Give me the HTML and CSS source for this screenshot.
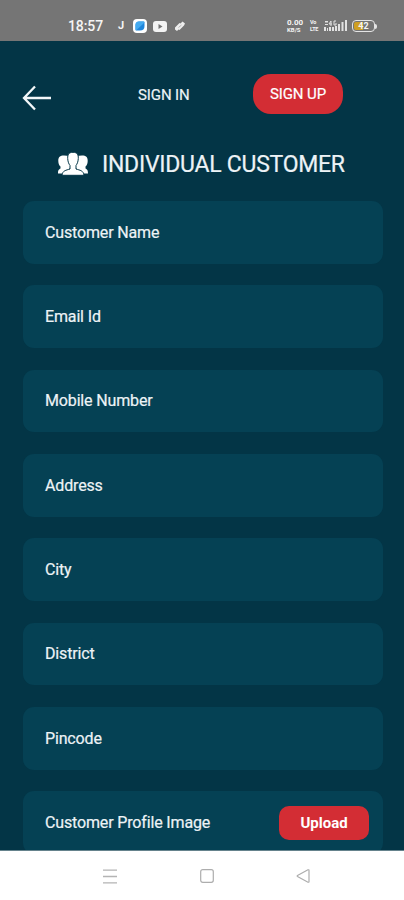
FILE: index.html
```html
<!DOCTYPE html>
<html lang="en">
<head>
<meta charset="utf-8">
<title>Individual Customer</title>
<link rel="stylesheet" href="styles.css">
</head>
<body>
<div class="phone">
  <header class="status">
    <span class="clock">18:57</span>
    <span class="letter">J</span>
    <svg class="app" width="14" height="14" viewBox="0 0 14 14"><rect width="14" height="14" rx="4" fill="#fff"/><path d="M6 2.500h4.500q1 0 1 1V7q0 4.500-4.500 4.500H3.500q-1 0-1-1V6q0-3.500 3.500-3.500z" fill="#1f86dc"/><path d="M6 2.500h4.500q1 0 1 1L3 11.500q-.5-.3-.5-1V6q0-3.500 3.500-3.500z" fill="#43aaf0"/></svg>
    <svg class="video" width="14" height="11" viewBox="0 0 14 11"><rect width="14" height="11" rx="3" fill="#f4f4f4"/><path d="M5.500 3l4 2.500-4 2.500z" fill="#747474"/></svg>
    <svg class="tag" width="12" height="12" viewBox="0 0 12 12"><path d="M1 7.500L5.500 3l1 .5L8.500 1.500l2.500 2-1 2L5.500 10l-1-.5L3 11 1 9.500z" fill="#eee"/><path d="M4.500 7.500l3-2.500" stroke="#999" stroke-width=".7"/></svg>
    <span class="rate"><b>0.00</b><b>KB/S</b></span>
    <span class="volte"><b>Vo</b><b>LTE</b></span>
    <svg class="signal" width="24" height="14" viewBox="0 0 24 14"><path fill="#e2e2e2" d="M1 2h3v1.500H1zM1 5h3v1H1zM0 8h2v4H0zM3 9h1v3H3zM5 8h2v4H5zM8 8h2v4H8zM11 7h2v5h-2zM14 5h2v7h-2zM17.500 3h2v9h-2zM21 1h2v11h-2z"/><path d="M5 5h3M7 2v5M5 5l2-3M12 2h-2v4h2V4" stroke="#e2e2e2" fill="none"/></svg>
    <span class="battery"><i class="level"></i><b>42</b></span><i class="nub"></i>
  </header>
  <main class="screen">
    <nav class="tabs">
      <svg class="back" width="30" height="26" viewBox="0 0 30 26"><path d="M13 1.500L2 13l11 11.500M2 13h27" fill="none" stroke="#f3f7f9" stroke-width="2.300"/></svg>
      <span class="signin">SIGN IN</span>
      <span class="signup">SIGN UP</span>
    </nav>
    <h1 class="title">
      <svg width="32" height="24" viewBox="0 0 32 24"><g fill="#fff"><path d="M7 3.500C3 3.500 1.200 5 1.300 9c.1 3 1 4.500 2.200 5.500v2C2 17.300 1 18 1 21.500h8L13 16V4z"/><path d="M25 3.500c4 0 5.800 1.500 5.700 5.500-.1 3-1 4.500-2.200 5.500v2c1.500.8 2.500 1.500 2.500 5h-8L19 16V4z"/><path d="M16 .3c-4 0-5.500 2.200-5.300 6.200.2 3.500 1.200 5.500 2.300 7v3.500C9 18.300 5.500 18.500 5 23.300h22c-.5-4.800-4-5-8-6.300v-3.500c1.100-1.500 2.100-3.500 2.300-7C21.500 2.500 20 .3 16 .3z" stroke="#033546" stroke-width="1"/></g></svg>
      <span>INDIVIDUAL CUSTOMER</span>
    </h1>
    <form class="fields">
      <div class="field">Customer Name</div>
      <div class="field">Email Id</div>
      <div class="field">Mobile Number</div>
      <div class="field">Address</div>
      <div class="field">City</div>
      <div class="field">District</div>
      <div class="field">Pincode</div>
      <div class="field">Customer Profile Image<span class="upload">Upload</span></div>
    </form>
  </main>
  <footer class="navbar">
    <svg width="14" height="15" viewBox="0 0 14 15"><path d="M0 1.200h14M0 7.500h14M0 13.800h14" stroke="#b4b4b4" stroke-width="1.300"/></svg>
    <svg width="14" height="14" viewBox="0 0 14 14"><rect x=".7" y=".7" width="12.600" height="12.600" rx="2" fill="none" stroke="#adadad" stroke-width="1.200"/></svg>
    <svg width="14" height="14" viewBox="0 0 14 14"><path d="M12 .8L1.500 6.500q-.7.500 0 1L12 13.200q1 .3 1-.7v-11q0-1-1-.7z" fill="none" stroke="#adadad" stroke-width="1.200"/></svg>
  </footer>
</div>
</body>
</html>
```
FILE: styles.css
```css
* { box-sizing: border-box; }
body { margin: 0; font-family: Roboto, "Liberation Sans", sans-serif; }
.phone { width: 404px; height: 900px; display: flex; flex-direction: column; overflow: hidden; background: #fff; }
.status { height: 41px; flex: none; display: flex; align-items: center; padding: 11px 0 0 68px; background: #757575; color: #f4f4f4; }
.clock { width: 50px; font: 500 14px/16px Roboto, sans-serif; letter-spacing: -.1px; }
.letter { width: 15px; font: 700 11px/12px Roboto, sans-serif; }
.app, .video, .tag, .signal { flex: none; }
.video { margin-left: 6px; }
.tag { margin-left: 7px; }
.rate, .volte { display: flex; flex-direction: column; flex: none; }
.rate { margin-left: 101px; width: 23px; font-size: 8px; line-height: 7px; }
.rate b + b { font-size: 6px; line-height: 7px; }
.volte { width: 14px; font-size: 5.500px; line-height: 7px; letter-spacing: -.2px; }
.battery { position: relative; width: 23px; height: 12px; margin-left: 4px; border: 1.500px solid #e4e4e4; border-radius: 4px; flex: none; text-align: center; font-size: 9px; line-height: 10px; }
.level { position: absolute; left: 1px; top: 1px; width: 9px; height: 8px; border-radius: 2px 0 0 2px; background: #cf9f22; }
.battery b { position: relative; }
.nub { width: 2px; height: 5px; border-radius: 0 2px 2px 0; background: #e4e4e4; }
.screen { flex: none; height: 810px; overflow: hidden; background: #033546; color: #edf3f6; border-bottom: 1px solid #65828c; }
.tabs { display: flex; align-items: center; height: 40px; margin-top: 33px; padding-left: 22px; font-size: 15px; line-height: 18px; -webkit-text-stroke: .2px currentColor; }
.back { margin-top: 7px; }
.signin { margin-left: 86px; padding-top: 1px; width: 115px; letter-spacing: -.1px; }
.signup { width: 90px; height: 40px; line-height: 41px; border-radius: 18px; background: #d32d34; color: #fff; text-align: center; letter-spacing: -.1px; }
.title { display: flex; align-items: center; height: 32px; margin: 34px 0 0 57px; gap: 13px; font-size: 23px; font-weight: 400; letter-spacing: -.27px; white-space: nowrap; -webkit-text-stroke: .2px currentColor; }
.fields { margin: 21px 21.500px 0 22.500px; display: flex; flex-direction: column; gap: 21.850px; }
.field { height: 62.500px; flex: none; display: flex; align-items: center; justify-content: space-between; padding: 0 13px 0 22.500px; border-radius: 11px; background: #054154; font-size: 16px; letter-spacing: -.15px; -webkit-text-stroke: .2px currentColor; }
.upload { width: 90px; height: 34px; margin-right: .5px; line-height: 34px; border-radius: 10px; background: #d32d34; color: #fff; text-align: center; font-size: 15px; font-weight: 700; letter-spacing: 0; -webkit-text-stroke: 0; }
.navbar { flex: 1; display: flex; align-items: center; padding: 1px 0 0 103px; gap: 82.500px; }
```
